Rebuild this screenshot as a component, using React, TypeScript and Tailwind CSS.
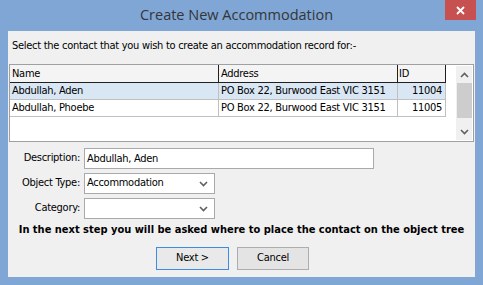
import React from "react";

const font = { fontFamily: '"DejaVu Sans Condensed", "DejaVu Sans", sans-serif' };

const rows = [
  { name: "Abdullah, Aden", address: "PO Box 22, Burwood East VIC 3151", id: "11004", selected: true },
  { name: "Abdullah, Phoebe", address: "PO Box 22, Burwood East VIC 3151", id: "11005", selected: false },
];

function Chevron({ up = false }: { up?: boolean }) {
  return (
    <svg width="9" height="6" viewBox="0 0 9 6" className={up ? "" : "rotate-180"}>
      <path d="M1 5 L4.5 1.5 L8 5" fill="none" stroke="#606060" strokeWidth="1.6" />
    </svg>
  );
}

function Combo({ value }: { value: string }) {
  return (
    <div className="flex items-center w-[131px] h-[21px] bg-white border border-[#a9a9a9] pl-[2px] pr-[6px]">
      <span className="flex-1 truncate">{value}</span>
      <Chevron />
    </div>
  );
}

export default function App() {
  return (
    <div
      className="w-[483px] h-[285px] bg-[#7fa6d5] flex flex-col text-[11px] text-black select-none tracking-[-0.28px]"
      style={font}
    >
      <div className="flex h-[31px] shrink-0 tracking-normal">
        <div
          className="flex-1 pl-[28px] text-center leading-[30px] text-[14.5px] text-[#353535]"
          style={{ fontFamily: '"Open Sans", "Noto Sans", sans-serif' }}
        >
          Create New Accommodation
        </div>
        <div className="w-[31px] h-[20px] mr-[7px] bg-[#c75050] flex items-center justify-center">
          <svg width="9" height="9" viewBox="0 0 9 9">
            <path d="M1 1 L8 8 M8 1 L1 8" stroke="white" strokeWidth="1.8" />
          </svg>
        </div>
      </div>

      <div className="flex-1 mx-[8px] mb-[8px] bg-[#f0f0f0] flex flex-col">
        <div className="pl-[4px] pt-[8px] leading-[13px]">
          Select the contact that you wish to create an accommodation record for:-
        </div>

        <div className="mt-[12px] ml-[1px] w-[465px] h-[78px] bg-white border border-[#a0a0a0] flex">
          <div className="w-[436px] flex flex-col">
            <div className="flex h-[18px] bg-[#f4f4f4] border-b border-[#202020] leading-[17px]">
              <div className="w-[209px] pl-[2px] border-r border-[#202020]">Name</div>
              <div className="w-[179px] pl-[2px] border-r border-[#202020]">Address</div>
              <div className="w-[48px] pl-[1px] border-r border-[#202020]">ID</div>
            </div>
            {rows.map((r) => (
              <div
                key={r.id}
                className={`flex h-[17px] leading-[16px] border-b border-[#c0c0c0] ${r.selected ? "bg-[#d9e6f4]" : "bg-white"}`}
              >
                <div className="w-[209px] pl-[2px] border-r border-[#c0c0c0]">{r.name}</div>
                <div className="w-[179px] pl-[2px] border-r border-[#c0c0c0]">{r.address}</div>
                <div className="w-[48px] pr-[3px] text-right border-r border-[#c0c0c0]">{r.id}</div>
              </div>
            ))}
          </div>
          <div className="flex-1" />
          <div className="w-[16px] flex flex-col items-center bg-[#f0f0f0] mr-[1px] my-[1px]">
            <div className="h-[17px] flex items-center justify-center">
              <Chevron up />
            </div>
            <div className="w-[15px] h-[35px] bg-[#cdcdcd]" />
            <div className="flex-1" />
            <div className="h-[17px] flex items-center justify-center">
              <Chevron />
            </div>
          </div>
        </div>

        <div className="mt-[6px] flex flex-col gap-[4px]">
          <div className="flex items-center">
            <div className="w-[76px] text-right pr-[4px]">Description:</div>
            <div className="w-[290px] h-[21px] bg-white border border-[#a9a9a9] pl-[2px] leading-[19px]">
              Abdullah, Aden
            </div>
          </div>
          <div className="flex items-center">
            <div className="w-[76px] text-right pr-[4px]">Object Type:</div>
            <Combo value="Accommodation" />
          </div>
          <div className="flex items-center">
            <div className="w-[76px] text-right pr-[4px]">Category:</div>
            <Combo value="" />
          </div>
        </div>

        <div className="mt-[4px] text-center font-bold leading-[14px] tracking-normal">
          In the next step you will be asked where to place the contact on the object tree
        </div>

        <div className="mt-[10px] flex justify-center gap-[8px] pr-[18px]">
          <div className="w-[73px] h-[23px] flex items-center justify-center bg-[#e9e9e9] border border-[#3c8ce3]">
            Next &gt;
          </div>
          <div className="w-[72px] h-[23px] flex items-center justify-center bg-[#e4e4e4] border border-[#adadad]">
            Cancel
          </div>
        </div>
      </div>
    </div>
  );
}
